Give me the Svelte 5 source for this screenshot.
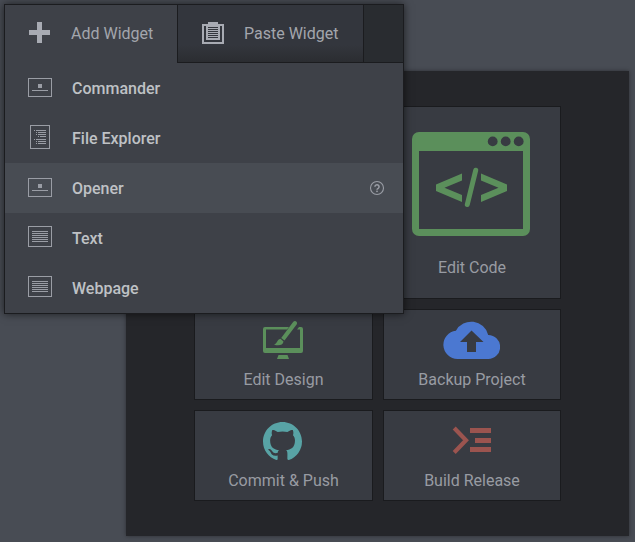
<script>
  const items = [
    { label: 'Commander', icon: 'prompt' },
    { label: 'File Explorer', icon: 'tree' },
    { label: 'Opener', icon: 'prompt', active: true },
    { label: 'Text', icon: 'lines' },
    { label: 'Webpage', icon: 'lines' }
  ];
  const treeRows = [[4, 4], [6, 6], [6, 8], [8, 10], [4, 13], [6, 15], [6, 17]];
</script>

<div class="desktop">
  <main class="panel">
    <div class="card"></div>
    <div class="card tall">
      <svg width="120" height="106" viewBox="0 0 120 106">
        <path fill="#5b8f5b" fill-rule="evenodd" d="M8 1H112a7 7 0 0 1 7 7V98a7 7 0 0 1-7 7H8a7 7 0 0 1-7-7V8a7 7 0 0 1 7-7zM8 20V98H112V20z" />
        <g fill="#383b42"><circle cx="81.700" cy="10.400" r="4.900" /><circle cx="94.700" cy="10.400" r="4.900" /><circle cx="107.700" cy="10.400" r="4.900" /></g>
        <g transform="translate(0.500 0)">
          <path fill="#5b8f5b" d="M50.500 42.500V49.500L33 56.700L50.500 64V71L24.500 60V53.500zM69.500 42.500V49.500L87 56.700L69.500 64V71L95.500 60V53.500z" />
          <path d="M64.200 39.300L55.800 73.500" stroke="#5b8f5b" stroke-width="5" stroke-linecap="round" />
        </g>
      </svg>
      <span>Edit Code</span>
    </div>
    <div class="card">
      <svg width="42" height="40" viewBox="0 0 42 40">
        <path fill="#5b8f5b" fill-rule="evenodd" d="M3 8H27L25 10.500H4V29H38V10.500H35L37 8H39a2 2 0 0 1 2 2V32a2 2 0 0 1-2 2H3a2 2 0 0 1-2-2V10a2 2 0 0 1 2-2zM16.500 36H25.500L27 40H15z" />
        <path fill="#5b8f5b" d="M31.300 2.800c1.500-2 4.800 0 3.500 2.500L22.500 21.500l-3.300-2.600zM18.500 19.800l3 2.700c-.5 4-5 4.500-9.500 3.200c3-.7 3-5.200 6.500-5.900z" />
      </svg>
      <span>Edit Design</span>
    </div>
    <div class="card">
      <svg class="cloud" width="58" height="40" viewBox="0 0 58 40">
        <path fill="#4b78d1" d="M15.500 40a14.200 14.200 0 0 1-1.600-28.300a17.500 17.500 0 0 1 32.300 4.200A12 12 0 0 1 46 40z" />
        <path fill="#383b42" d="M29.500 11.500L41.500 23H34V33H25V23H18z" />
      </svg>
      <span>Backup Project</span>
    </div>
    <div class="card">
      <svg class="mark" width="39" height="39" viewBox="0 0 16 16">
        <path fill="#58a3a5" d="M8 0C3.580 0 0 3.580 0 8c0 3.540 2.290 6.530 5.470 7.590.4.070.55-.17.55-.38 0-.19-.01-.82-.01-1.490-2.010.37-2.530-.49-2.690-.94-.09-.23-.48-.94-.82-1.130-.28-.15-.68-.52-.01-.53.63-.01 1.080.58 1.230.82.72 1.210 1.870.87 2.330.66.07-.52.28-.87.51-1.070-1.780-.2-3.640-.89-3.640-3.950 0-.87.31-1.590.82-2.150-.08-.2-.36-1.020.08-2.120 0 0 .67-.21 2.200.82.64-.18 1.320-.27 2-.27s1.360.09 2 .27c1.530-1.040 2.200-.82 2.200-.82.44 1.100.16 1.920.08 2.120.51.56.82 1.270.82 2.150 0 3.070-1.870 3.750-3.650 3.950.29.25.54.73.54 1.480 0 1.070-.01 1.930-.01 2.200 0 .21.15.46.55.38A8.010 8.010 0 0 0 16 8c0-4.420-3.580-8-8-8z" />
      </svg>
      <span>Commit &amp; Push</span>
    </div>
    <div class="card">
      <svg class="release" width="40" height="40" viewBox="0 0 40 40">
        <path fill="none" stroke="#9b544f" stroke-width="4.200" d="M2.200 8L14 20.300L2.200 32.500" />
        <path fill="#9b544f" d="M18 8H39v5H18zM23 18H39v5H23zM18 27H39v5H18z" />
      </svg>
      <span>Build Release</span>
    </div>
  </main>

  <div class="menu">
    <div class="tabs">
      <div class="tab current">
        <svg width="24" height="24" viewBox="0 0 24 24" shape-rendering="crispEdges"><path fill="#a8abb3" d="M9 1h5v8h8v5h-8v8H9v-8H1V9h8z" /></svg>
        <span>Add Widget</span>
      </div>
      <div class="tab paste">
        <svg width="24" height="24" viewBox="0 0 24 24" shape-rendering="crispEdges" fill="#a8abb3">
          <path fill-rule="evenodd" d="M1 3h6V1h10v2h6v20H1zM3 5v16h18V5h-2v14H5V5z" />
          <path fill="#33363d" d="M7 6h10v1H7zM7 8h10v1H7zM7 10h10v1H7zM7 12h10v1H7zM7 14h10v1H7zM7 16h10v1H7z" />
        </svg>
        <span>Paste Widget</span>
      </div>
    </div>
    <ul>
      {#each items as item}
        <li class:active={item.active}>
          <svg width="24" height="24" viewBox="0 0 24 24" shape-rendering="crispEdges" fill="#9a9da5" overflow="visible">
            {#if item.icon === 'prompt'}
              <path fill-rule="evenodd" d="M0 2h24v19H0zM1 3v17h22V3zM10 8h4v4h-4zM4 14h16v1H4z" />
            {:else if item.icon === 'lines'}
              <path fill-rule="evenodd" d="M0 0h24v21H0zM1 1v19h22V1z" />
              {#each [5, 7, 9, 11, 13, 15] as y}<rect x="4" {y} width="16" height="1" />{/each}
            {:else}
              <path fill-rule="evenodd" d="M2 -1h20v24H2zM3 0v22h18V0z" />
              {#each treeRows as [x, y]}
                <rect x={x + 2} {y} width="1" height="1" />
                <rect x={x + 4} {y} width={14 - x} height="1" />
              {/each}
            {/if}
          </svg>
          <span>{item.label}</span>
          {#if item.active}
            <svg class="help" width="16" height="16" viewBox="0 0 16 16"><circle cx="8" cy="8" r="6.500" fill="none" stroke="#9a9da5" stroke-width="1.100" /><path d="M5.900 6.800a2.100 1.900 0 1 1 3.300 1.500Q8 9 8 9.800" fill="none" stroke="#9a9da5" stroke-width="1.500" /><rect x="7.200" y="10.600" width="1.600" height="1.500" fill="#9a9da5" /></svg>
          {/if}
        </li>
      {/each}
    </ul>
  </div>
</div>

<style>
  .desktop {
    position: relative;
    box-sizing: border-box;
    width: 635px;
    height: 542px;
    padding: 71px 6px 6px 126px;
    overflow: hidden;
    background: #484c54;
    font: 16px Roboto, sans-serif;
    color: #989ba3;
  }
  .panel {
    box-sizing: border-box;
    height: 465px;
    padding: 35px 68px;
    display: grid;
    grid-template-columns: 179px 178px;
    grid-template-rows: 193px 91px 91px;
    gap: 10px;
    background: #25262a;
    box-shadow: 0 0 4px rgba(0, 0, 0, 0.4);
  }
  .card {
    box-sizing: border-box;
    border: 1px solid #1a1b1e;
    background: #383b42;
    display: flex;
    flex-direction: column;
    align-items: center;
    padding-top: 9px;
  }
  .card svg { margin-right: 1px; }
  .card svg.mark { margin: 2px 2px 0 0; }
  .card svg.cloud { margin-right: 2px; }
  .card svg.release { margin-right: 0; }
  .card span { margin-top: 11px; line-height: 20px; }
  .card svg.mark + span { margin-top: 10px; }
  .card.tall { padding-top: 24px; }
  .card.tall svg { margin-right: 2px; }
  .card.tall span { margin-top: 21px; }
  .menu {
    position: absolute;
    left: 4px;
    top: 4px;
    box-sizing: border-box;
    width: 400px;
    height: 310px;
    border: 1px solid #1b1c1f;
    background: #3e4148;
    box-shadow: 0 0 8px rgba(0, 0, 0, 0.6);
  }
  .tabs { display: flex; height: 58px; background: #292c30; }
  .tab {
    box-sizing: border-box;
    display: flex;
    align-items: center;
    gap: 19px;
    padding-left: 23px;
    line-height: 20px;
    color: #a3a6ad;
  }
  .tab span { padding-top: 2px; }
  .current { width: 172px; padding-bottom: 2px; background: #3e4148; }
  .paste {
    width: 187px;
    padding-bottom: 1px;
    border: solid #1b1c1f;
    border-width: 0 1px 1px;
    background: linear-gradient(#33363d 70%, #2b2d31);
  }
  .tabs::after { content: ''; flex: 1; border-bottom: 1px solid #1b1c1f; }
  ul { margin: 0; padding: 0; list-style: none; }
  li {
    box-sizing: border-box;
    display: flex;
    align-items: center;
    gap: 20px;
    height: 50px;
    padding: 0 18px 0 23px;
    color: #bfc1c5;
    font-weight: 500;
  }
  .active { background: #484c53; }
  .help { margin-left: auto; }
</style>
